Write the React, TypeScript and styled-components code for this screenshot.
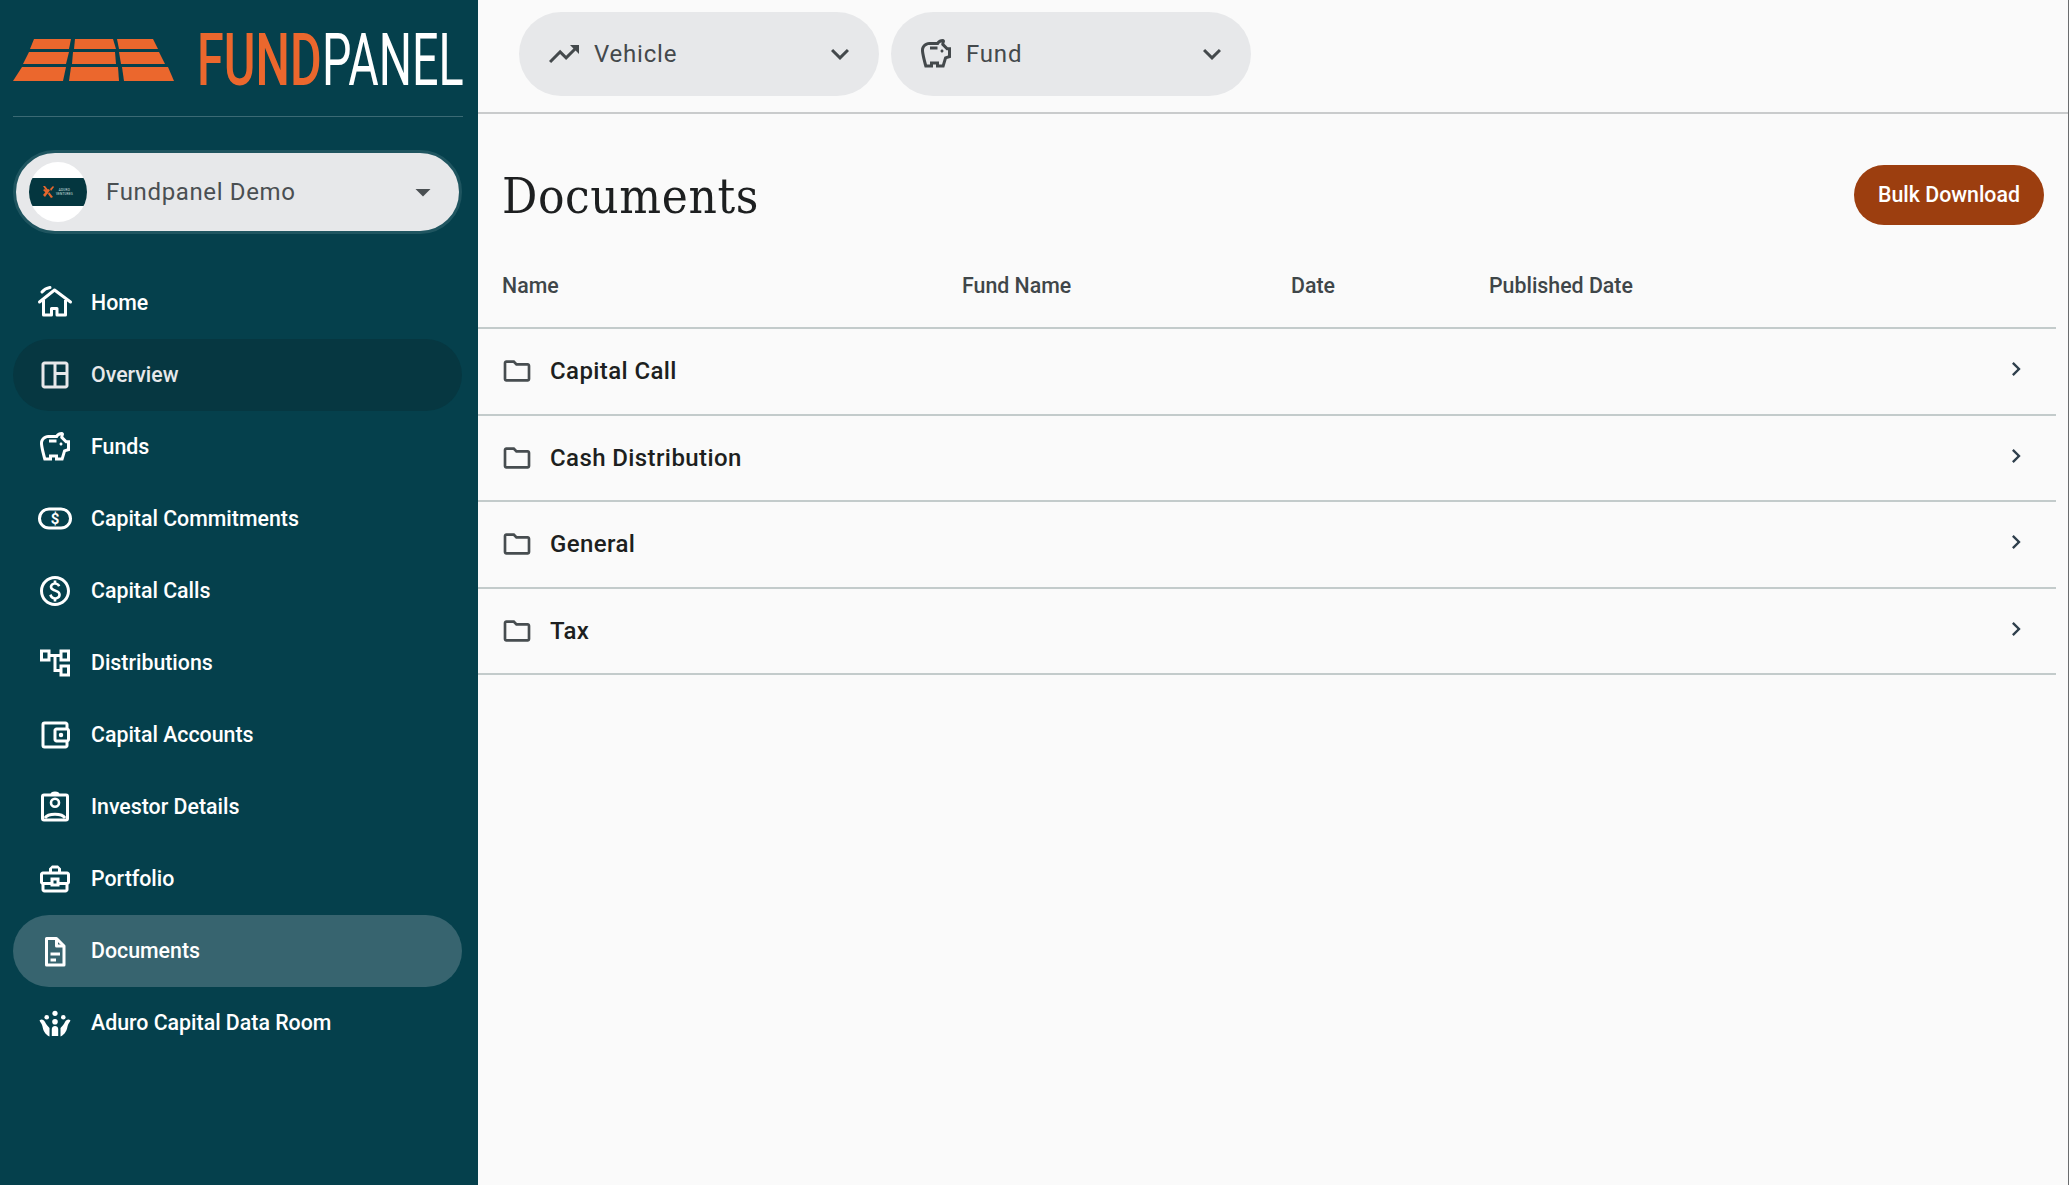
import React from 'react';
import styled, { createGlobalStyle } from 'styled-components';
import {
  MdArrowDropDown,
  MdChevronRight,
  MdKeyboardArrowDown,
  MdOutlineAccountBalanceWallet,
  MdOutlineAccountTree,
  MdOutlineBusinessCenter,
  MdOutlineFolder,
  MdOutlinePaid,
  MdOutlineSavings,
  MdOutlineSpaceDashboard,
  MdOutlineTrendingUp,
} from 'react-icons/md';

const GlobalStyle = createGlobalStyle`
  html, body {
    margin: 0;
    padding: 0;
    height: 100%;
    overflow: hidden;
    background: #fafafa;
    font-family: Roboto, "Liberation Sans", sans-serif;
  }
  #root {
    height: 100%;
  }
`;

const Page = styled.div`
  display: flex;
  height: 100vh;
  border-right: 1px solid #6a6c6e;
  box-sizing: border-box;
`;

const Sidebar = styled.aside`
  width: 478px;
  flex-shrink: 0;
  background: #05404c;
  padding: 0 16px 0 13px;
  box-sizing: border-box;
`;

const LogoRow = styled.div`
  height: 116px;
  border-bottom: 1px solid #3b6a74;
  box-sizing: content-box;
  width: 450px;
`;

const AccountPicker = styled.div`
  margin-top: 33px;
  width: 449px;
  height: 84px;
  box-sizing: border-box;
  border: 3px solid #1f5560;
  border-radius: 42px;
  background: #e7e8ea;
  display: flex;
  align-items: center;
  padding: 0 18px 0 13px;
  color: #4a4f52;
`;

const Avatar = styled.div`
  width: 58px;
  height: 60px;
  border-radius: 50%;
  background: #fff;
  display: flex;
  align-items: center;
  overflow: hidden;
  flex-shrink: 0;
`;

const AvatarBand = styled.div`
  width: 100%;
  height: 28px;
  background: #04363f;
  display: flex;
  align-items: center;
  justify-content: center;
  gap: 2px;
`;

const AvatarText = styled.span`
  font-size: 3px;
  line-height: 4px;
  color: #dfe6e6;
  text-align: center;
  letter-spacing: 0.3px;
`;

const AccountName = styled.span`
  flex: 1;
  margin-left: 19px;
  font-size: 24px;
  letter-spacing: 0.65px;
`;

const NavList = styled.nav`
  margin-top: 33px;
  width: 449px;
  display: flex;
  flex-direction: column;
`;

const NavItem = styled.div<{ $state?: 'hover' | 'active' }>`
  height: 72px;
  box-sizing: border-box;
  border-radius: 36px;
  display: flex;
  align-items: center;
  padding: 0 0 1px 24px;
  font-size: 21.33px;
  font-weight: 500;
  color: ${(p) => (p.$state === 'hover' ? '#e7e8ea' : '#fff')};
  background: ${(p) =>
    p.$state === 'hover' ? '#063741' : p.$state === 'active' ? '#37646f' : 'transparent'};
`;

const NavIcon = styled.span`
  width: 36px;
  height: 36px;
  margin-right: 18px;
  display: flex;
  align-items: center;
  justify-content: center;
  font-size: 36px;
`;

const Main = styled.main`
  flex: 1;
  min-width: 0;
  display: flex;
  flex-direction: column;
`;

const TopBar = styled.header`
  height: 114px;
  flex-shrink: 0;
  box-sizing: border-box;
  border-bottom: 2px solid #c9cbcc;
  padding: 12px 0 0 41px;
  display: flex;
  gap: 12px;
  align-items: flex-start;
`;

const FilterPill = styled.div`
  width: 360px;
  height: 84px;
  border-radius: 42px;
  background: #e7e8ea;
  display: flex;
  align-items: center;
  padding: 0 21px 0 27px;
  box-sizing: border-box;
  color: #44494c;
  font-size: 24px;
  letter-spacing: 0.8px;
`;

const FilterIcon = styled.span`
  width: 36px;
  height: 36px;
  font-size: 36px;
  display: flex;
  align-items: center;
  justify-content: center;
  margin-right: 12px;
  flex-shrink: 0;
`;

const FilterLabel = styled.span`
  flex: 1;
`;

const FilterCaret = styled.span`
  font-size: 36px;
  display: flex;
`;

const TitleRow = styled.div`
  height: 160px;
  box-sizing: border-box;
  padding: 51px 24px 0 24px;
  display: flex;
  justify-content: space-between;
  align-items: flex-start;
`;

const Title = styled.h1`
  margin: 2px 0 0;
  font-family: "DejaVu Serif", "Liberation Serif", serif;
  font-stretch: condensed;
  font-size: 49px;
  line-height: 60px;
  letter-spacing: 0.6px;
  font-weight: 400;
  color: #1d1f20;
`;

const PrimaryButton = styled.button`
  width: 190px;
  height: 60px;
  border: 0;
  border-radius: 30px;
  background: #9c3e0f;
  color: #fff;
  font-family: inherit;
  font-size: 21.33px;
  font-weight: 500;
  padding-bottom: 2px;
`;

const Table = styled.div`
  width: 1578px;
`;

const HeaderRow = styled.div`
  height: 55px;
  box-sizing: border-box;
  display: grid;
  grid-template-columns: 460px 329px 198px 1fr;
  align-items: flex-start;
  border-bottom: 2px solid #c3cbcb;
  font-size: 21.33px;
  font-weight: 500;
  line-height: 24px;
  color: #3f4649;
`;

const HeaderCell = styled.div`
  padding-left: 24px;
`;

const FolderRow = styled.div`
  height: 86.5px;
  box-sizing: border-box;
  display: flex;
  align-items: center;
  padding: 0 26px 0 24px;
  border-bottom: 2px solid #c3cbcb;
`;

const FolderIcon = styled.span`
  width: 32px;
  height: 32px;
  font-size: 32px;
  color: #474d50;
  margin-left: -1px;
  margin-right: 17px;
  display: flex;
`;

const FolderName = styled.span`
  flex: 1;
  font-size: 24px;
  font-weight: 500;
  letter-spacing: 0.4px;
  color: #1d1f20;
`;

const RowChevron = styled.span`
  font-size: 28px;
  color: #2f3f4c;
  display: flex;
  margin-top: -4px;
`;

function HomeIcon() {
  return (
    <svg width="36" height="36" viewBox="0 0 36 36" fill="none" stroke="currentColor" strokeWidth="3">
      <path d="M2.5 17 17.5 5 33.5 17" strokeLinecap="round" strokeLinejoin="round" />
      <path d="M6.5 15V30H14.5V23.5H20V30H28.5V15" strokeLinejoin="round" />
      <path d="M5 7C7 4.5 10 3 13 2.5" strokeLinecap="round" />
    </svg>
  );
}

function PillDollarIcon() {
  return (
    <svg width="36" height="36" viewBox="0 0 36 36" fill="none">
      <rect x="2.5" y="8" width="31" height="19" rx="9.5" stroke="currentColor" strokeWidth="3" />
      <text
        x="18"
        y="23.2"
        textAnchor="middle"
        fontFamily="Roboto, sans-serif"
        fontSize="15"
        fontWeight="700"
        fill="currentColor"
      >
        $
      </text>
    </svg>
  );
}

function InvestorIcon() {
  return (
    <svg width="36" height="36" viewBox="0 0 36 36" fill="none" stroke="currentColor" strokeWidth="3">
      <rect x="5.5" y="6" width="25" height="25" rx="1.5" />
      <path d="M15 5.5C15 3.5 21 3.5 21 5.5" />
      <circle cx="18" cy="13.8" r="4" strokeWidth="2.6" />
      <path d="M8 29C11 24 25 24 28 29" />
    </svg>
  );
}

function DocumentIcon() {
  return (
    <svg width="36" height="36" viewBox="0 0 36 36" fill="none" stroke="currentColor" strokeWidth="3">
      <path d="M9.5 5.5H19.5L27 13V32H9.5Z" strokeLinejoin="round" />
      <path d="M19.5 5.5V13H27" strokeLinejoin="round" />
      <path d="M13.5 21H23" />
      <path d="M13.5 27H19" />
    </svg>
  );
}

function DataRoomIcon() {
  return (
    <svg width="36" height="36" viewBox="0 0 36 36" fill="currentColor">
      <circle cx="18" cy="8.3" r="2.6" />
      <circle cx="9.7" cy="12.3" r="2.3" />
      <circle cx="26.3" cy="12.3" r="2.3" />
      <circle cx="18" cy="16.7" r="2.8" />
      <path d="M14.8 31V24C14.8 20 21.2 20 21.2 24V31Z" />
      <path d="M2.5 15.5C4.5 13.5 7 15 8 17C9.5 20 11 21.5 12.5 23V31.5C8 29.5 6 25 5.5 21.5C5 19 3.5 17.5 2.5 15.5Z" />
      <path d="M33.5 15.5C31.5 13.5 29 15 28 17C26.5 20 25 21.5 23.5 23V31.5C28 29.5 30 25 30.5 21.5C31 19 32.5 17.5 33.5 15.5Z" />
    </svg>
  );
}

function AduroMark() {
  return (
    <svg width="11" height="12" viewBox="0 0 11 12" fill="#e8672d">
      <polygon points="0,0 2,0 6,5 4,6" />
      <polygon points="0,4 2,3 5,7 4,8" />
      <polygon points="0,9 5,3 7,4 2,11" />
      <polygon points="6,6 10,11 8,12 5,8" />
      <polygon points="7,3 10,0 11,1 8,5" />
    </svg>
  );
}

const logoTiles = [
  '34,39 71,39 69,49 30,49',
  '75,39 113,39 116,49 74,49',
  '127,39 153,39 158,49 119,49 117,39',
  '29,52 69,52 66,64 23,64',
  '73,52 115,52 116,64 72,64',
  '119,52 159,52 165,64 121,64',
  '22,67 66,67 63,81 13,81',
  '71,67 118,67 119,81 69,81',
  '122,67 168,67 174,81 124,81',
];

function Logo() {
  return (
    <svg width="460" height="116" viewBox="13 0 460 116">
      {logoTiles.map((points) => (
        <polygon key={points} points={points} fill="#eb672d" />
      ))}
      <text
        transform="translate(197 85) scale(0.674 1)"
        fontFamily="Roboto, sans-serif"
        fontSize="72"
        fontWeight="500"
        fill="#eb672d"
      >
        FUND
      </text>
      <text
        transform="translate(322 85) scale(0.648 1)"
        fontFamily="Roboto, sans-serif"
        fontSize="72"
        fontWeight="400"
        fill="#fff"
      >
        PANEL
      </text>
    </svg>
  );
}

const navItems: { label: string; icon: React.ReactNode; state?: 'hover' | 'active' }[] = [
  { label: 'Home', icon: <HomeIcon /> },
  { label: 'Overview', icon: <MdOutlineSpaceDashboard />, state: 'hover' },
  { label: 'Funds', icon: <MdOutlineSavings /> },
  { label: 'Capital Commitments', icon: <PillDollarIcon /> },
  { label: 'Capital Calls', icon: <MdOutlinePaid /> },
  { label: 'Distributions', icon: <MdOutlineAccountTree /> },
  { label: 'Capital Accounts', icon: <MdOutlineAccountBalanceWallet /> },
  { label: 'Investor Details', icon: <InvestorIcon /> },
  { label: 'Portfolio', icon: <MdOutlineBusinessCenter /> },
  { label: 'Documents', icon: <DocumentIcon />, state: 'active' },
  { label: 'Aduro Capital Data Room', icon: <DataRoomIcon /> },
];

const folders = ['Capital Call', 'Cash Distribution', 'General', 'Tax'];

const App = () => {
  return (
    <Page>
      <GlobalStyle />
      <Sidebar>
        <LogoRow>
          <Logo />
        </LogoRow>
        <AccountPicker>
          <Avatar>
            <AvatarBand>
              <AduroMark />
              <AvatarText>
                ADURO
                <br />
                VENTURES
              </AvatarText>
            </AvatarBand>
          </Avatar>
          <AccountName>Fundpanel Demo</AccountName>
          <MdArrowDropDown size={36} color="#4a4f52" />
        </AccountPicker>
        <NavList>
          {navItems.map((item) => (
            <NavItem key={item.label} $state={item.state}>
              <NavIcon>{item.icon}</NavIcon>
              {item.label}
            </NavItem>
          ))}
        </NavList>
      </Sidebar>
      <Main>
        <TopBar>
          <FilterPill>
            <FilterIcon>
              <MdOutlineTrendingUp />
            </FilterIcon>
            <FilterLabel>Vehicle</FilterLabel>
            <FilterCaret>
              <MdKeyboardArrowDown />
            </FilterCaret>
          </FilterPill>
          <FilterPill>
            <FilterIcon>
              <MdOutlineSavings />
            </FilterIcon>
            <FilterLabel>Fund</FilterLabel>
            <FilterCaret>
              <MdKeyboardArrowDown />
            </FilterCaret>
          </FilterPill>
        </TopBar>
        <TitleRow>
          <Title>Documents</Title>
          <PrimaryButton>Bulk Download</PrimaryButton>
        </TitleRow>
        <Table>
          <HeaderRow>
            <HeaderCell>Name</HeaderCell>
            <HeaderCell>Fund Name</HeaderCell>
            <HeaderCell>Date</HeaderCell>
            <HeaderCell>Published Date</HeaderCell>
          </HeaderRow>
          {folders.map((name) => (
            <FolderRow key={name}>
              <FolderIcon>
                <MdOutlineFolder />
              </FolderIcon>
              <FolderName>{name}</FolderName>
              <RowChevron>
                <MdChevronRight />
              </RowChevron>
            </FolderRow>
          ))}
        </Table>
      </Main>
    </Page>
  );
};

export default App;
